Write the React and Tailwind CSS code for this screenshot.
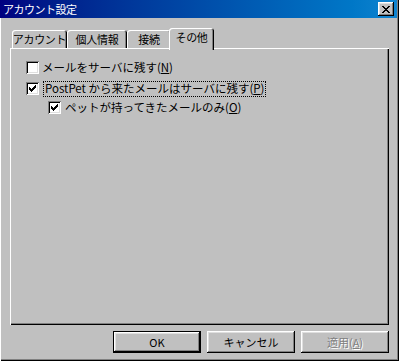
const font = "font-['Noto_Sans_CJK_JP','Noto_Sans',sans-serif]";

function CheckMark() {
  const rows = [
    [6, 0, 1], [5, 1, 2], [0, 2, 1], [4, 2, 3], [0, 3, 2], [3, 3, 3], [0, 4, 5], [1, 5, 3], [2, 6, 1],
  ];
  return (
    <svg width="7" height="7" viewBox="0 0 7 7" shapeRendering="crispEdges">
      {rows.map(([x, y, w], i) => (
        <rect key={i} x={x} y={y} width={w} height="1" fill="#000" />
      ))}
    </svg>
  );
}

function CloseGlyph() {
  const rows = [
    [0, 0, 2], [6, 0, 2], [1, 1, 2], [5, 1, 2], [2, 2, 4], [3, 3, 2], [2, 4, 4], [1, 5, 2], [5, 5, 2], [0, 6, 2], [6, 6, 2],
  ];
  return (
    <svg width="8" height="7" viewBox="0 0 8 7" shapeRendering="crispEdges">
      {rows.map(([x, y, w], i) => (
        <rect key={i} x={x} y={y} width={w} height="1" fill="#000" />
      ))}
    </svg>
  );
}

function Checkbox({ checked }) {
  return (
    <div className="w-[13px] h-[13px] shrink-0 bg-white flex items-center justify-center shadow-[inset_1px_1px_#808080,inset_-1px_-1px_#fff,inset_2px_2px_#000,inset_-2px_-2px_#dfdfdf]">
      {checked && <CheckMark />}
    </div>
  );
}

function Tab({ label, width, selected }) {
  return (
    <div
      className={
        "flex items-center justify-center rounded-t-[3px] bg-[#c0c0c0] tracking-[-0.3px] shadow-[inset_1px_1px_#fff,inset_-1px_0_#000,inset_-2px_0_#808080] " +
        width +
        (selected ? " h-[22px] -ml-[2px] -mb-[2px] relative z-10 pb-[3px]" : " h-[18px] pt-[1px]")
      }
    >
      {label}
    </div>
  );
}

function Button({ children, isDefault, disabled }) {
  return (
    <div
      className={
        "w-[88px] h-[22px] flex items-center justify-center bg-[#c0c0c0] " +
        (isDefault
          ? "border border-black shadow-[inset_-1px_-1px_#000,inset_1px_1px_#fff,inset_-2px_-2px_#808080,inset_2px_2px_#dfdfdf]"
          : "shadow-[inset_-1px_-1px_#000,inset_1px_1px_#fff,inset_-2px_-2px_#808080,inset_2px_2px_#dfdfdf]") +
        (disabled ? " text-[#808080] [text-shadow:1px_1px_0_#fff]" : " text-black")
      }
    >
      {children}
    </div>
  );
}

export default function App() {
  return (
    <div className={"w-[399px] h-[361px] bg-[#c0c0c0] flex flex-col text-[11px] leading-[13px] text-black " + font + " shadow-[inset_1px_0_#fff,inset_-1px_-1px_#000,inset_-2px_-2px_#808080]"}>
      {/* title bar */}
      <div className="h-[18px] mr-[2px] flex items-center justify-between pl-[3px] pr-[3px] bg-linear-to-r from-[#000080] to-[#1084d0]">
        <span className="text-white text-[11px] leading-[14px] tracking-[-0.5px]">アカウント設定</span>
        <div className="w-[16px] h-[14px] bg-[#c0c0c0] flex items-center justify-center shadow-[inset_-1px_-1px_#000,inset_1px_1px_#fff,inset_-2px_-2px_#808080,inset_2px_2px_#dfdfdf]">
          <CloseGlyph />
        </div>
      </div>

      <div className="flex flex-col pl-[10px] pr-[10px] pt-[10px]">
        {/* tabs */}
        <div className="h-[20px] flex items-end pl-[2px] relative z-10">
          <Tab label="アカウント" width="w-[55px]" />
          <Tab label="個人情報" width="w-[60px]" />
          <Tab label="接続" width="w-[44px]" />
          <Tab label="その他" width="w-[45px]" selected />
        </div>

        {/* panel */}
        <div className="h-[277px] flex flex-col pl-[16px] pt-[11px] text-[11.5px] shadow-[inset_1px_1px_#fff,inset_-1px_-1px_#000,inset_-2px_-2px_#808080]">
          <div className="h-[17px] flex items-center">
            <Checkbox />
            <span className="ml-[3px]">
              メールをサーバに残す(<span className="underline">N</span>)
            </span>
          </div>
          <div className="h-[17px] mt-[4px] flex items-center">
            <Checkbox checked />
            <span className="ml-[4px] px-[1px] h-[16px] flex items-center border border-dotted border-black">
              PostPet から来たメールはサーバに残す(<span className="underline">P</span>)
            </span>
          </div>
          <div className="h-[17px] mt-[2px] ml-[22px] flex items-center">
            <Checkbox checked />
            <span className="ml-[4px]">
              ペットが持ってきたメールのみ(<span className="underline">O</span>)
            </span>
          </div>
        </div>

        {/* buttons */}
        <div className="mt-[6px] flex justify-end gap-[6px]">
          <Button isDefault>OK</Button>
          <Button>キャンセル</Button>
          <Button disabled>
            適用(<span className="underline">A</span>)
          </Button>
        </div>
      </div>
    </div>
  );
}
